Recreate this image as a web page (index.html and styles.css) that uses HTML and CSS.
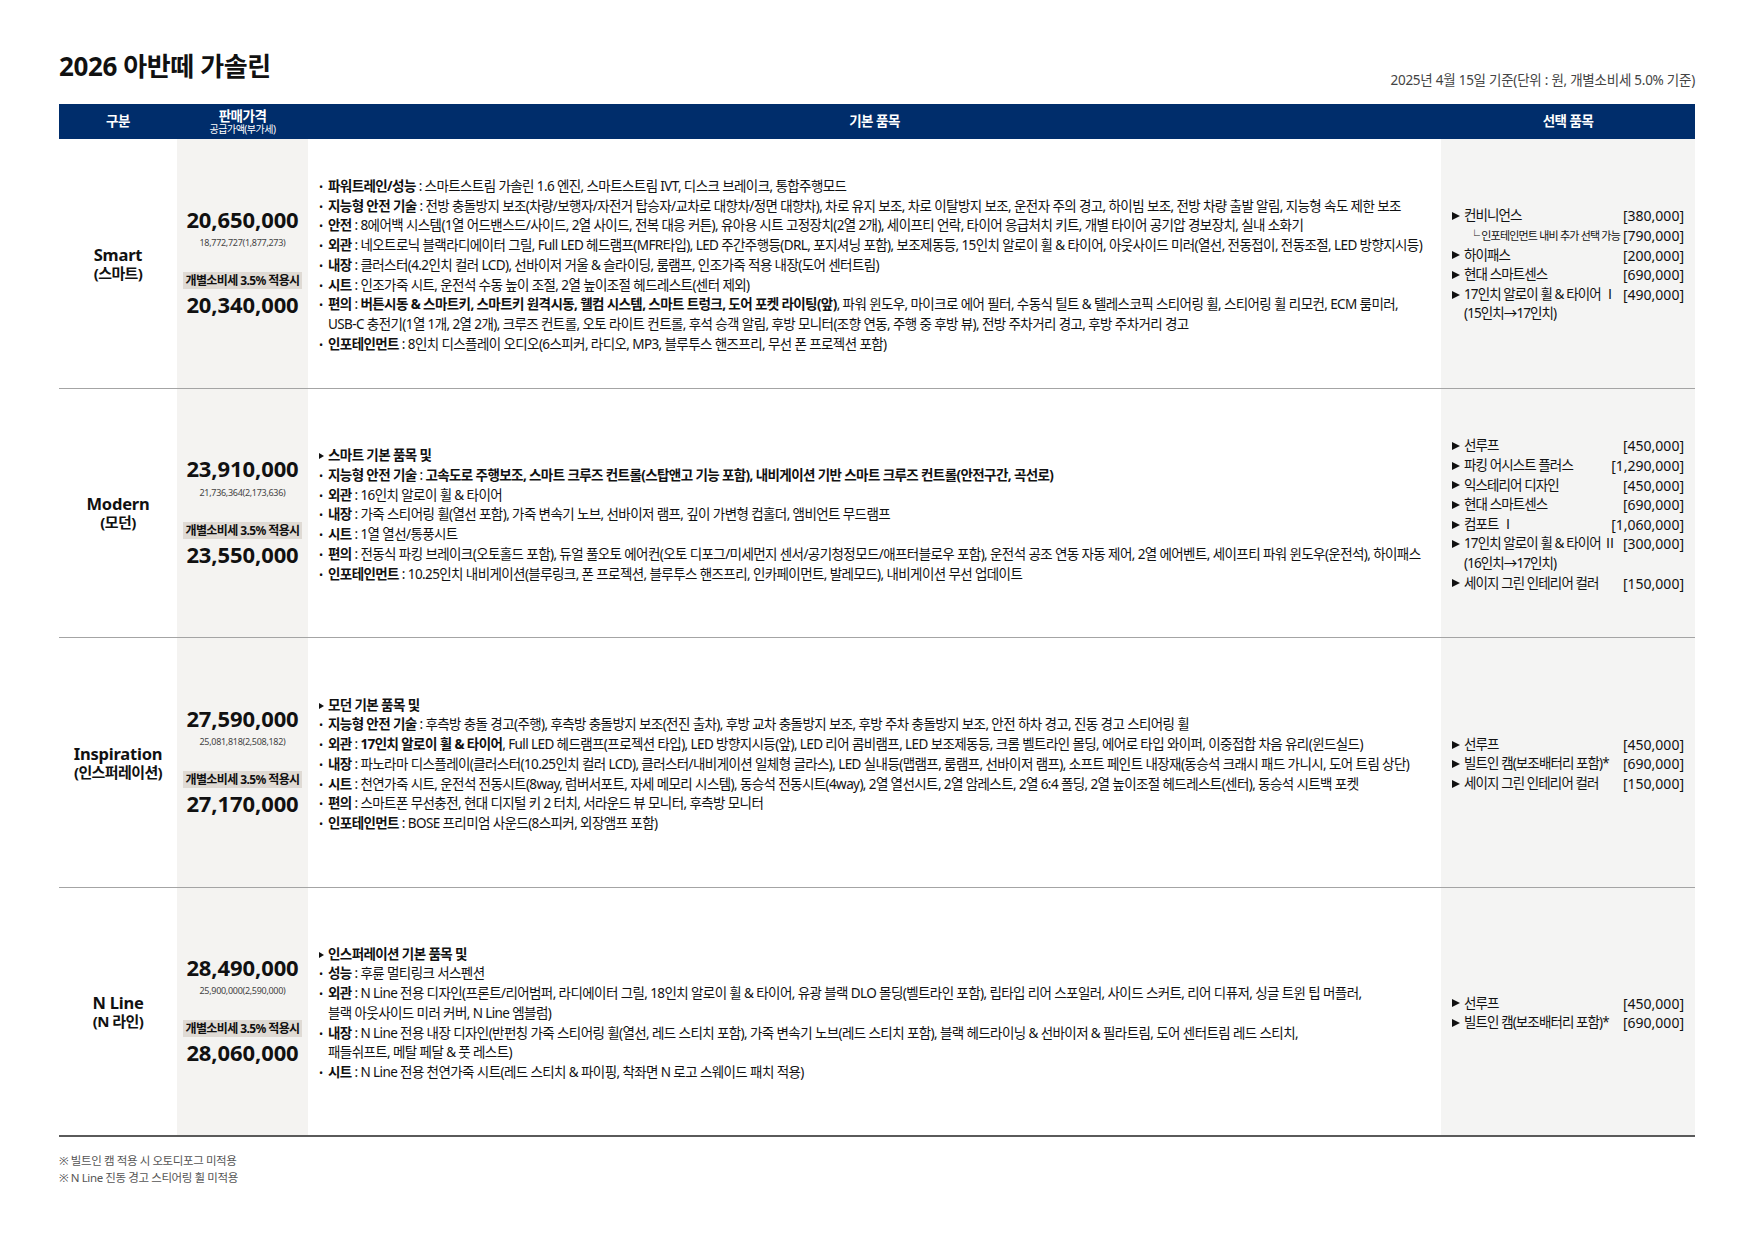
FILE: index.html
```html
<!DOCTYPE html>
<html lang="ko">
<head>
<meta charset="utf-8">
<title>2026 아반떼 가솔린</title>
<link rel="stylesheet" href="styles.css">
</head>
<body>
<div class="page">
  <div class="top">
    <h1 class="title">2026 아반떼 가솔린</h1>
    <div class="date">2025년 4월 15일 기준(단위 : 원, 개별소비세 5.0% 기준)</div>
  </div>

  <div class="table">
    <div class="thead">
      <div class="th">구분</div>
      <div class="th th-price"><div>판매가격</div><div class="th-sub">공급가액(부가세)</div></div>
      <div class="th">기본 품목</div>
      <div class="th">선택 품목</div>
    </div>

    <!-- Smart -->
    <div class="row">
      <div class="cell model"><div class="m-en">Smart</div><div class="m-ko">(스마트)</div></div>
      <div class="cell price">
        <div class="big">20,650,000</div>
        <div class="sub">18,772,727(1,877,273)</div>
        <div class="badge">개별소비세 3.5% 적용시</div>
        <div class="big big2">20,340,000</div>
      </div>
      <div class="cell basic">
        <ul class="list">
          <li><span class="bl">•</span><span class="tx"><b>파워트레인/성능</b> : 스마트스트림 가솔린 1.6 엔진, 스마트스트림 IVT, 디스크 브레이크, 통합주행모드</span></li>
          <li><span class="bl">•</span><span class="tx"><b>지능형 안전 기술</b> : 전방 충돌방지 보조(차량/보행자/자전거 탑승자/교차로 대향차/정면 대향차), 차로 유지 보조, 차로 이탈방지 보조, 운전자 주의 경고, 하이빔 보조, 전방 차량 출발 알림, 지능형 속도 제한 보조</span></li>
          <li><span class="bl">•</span><span class="tx"><b>안전</b> : 8에어백 시스템(1열 어드밴스드/사이드, 2열 사이드, 전복 대응 커튼), 유아용 시트 고정장치(2열 2개), 세이프티 언락, 타이어 응급처치 키트, 개별 타이어 공기압 경보장치, 실내 소화기</span></li>
          <li><span class="bl">•</span><span class="tx"><b>외관</b> : 네오트로닉 블랙라디에이터 그릴, Full LED 헤드램프(MFR타입), LED 주간주행등(DRL, 포지셔닝 포함), 보조제동등, 15인치 알로이 휠 &amp; 타이어, 아웃사이드 미러(열선, 전동접이, 전동조절, LED 방향지시등)</span></li>
          <li><span class="bl">•</span><span class="tx"><b>내장</b> : 클러스터(4.2인치 컬러 LCD), 선바이저 거울 &amp; 슬라이딩, 룸램프, 인조가죽 적용 내장(도어 센터트림)</span></li>
          <li><span class="bl">•</span><span class="tx"><b>시트</b> : 인조가죽 시트, 운전석 수동 높이 조절, 2열 높이조절 헤드레스트(센터 제외)</span></li>
          <li><span class="bl">•</span><span class="tx"><b>편의</b> : <b>버튼시동 &amp; 스마트키, 스마트키 원격시동, 웰컴 시스템, 스마트 트렁크, 도어 포켓 라이팅(앞)</b>, 파워 윈도우, 마이크로 에어 필터, 수동식 틸트 &amp; 텔레스코픽 스티어링 휠, 스티어링 휠 리모컨, ECM 룸미러,<br>USB-C 충전기(1열 1개, 2열 2개), 크루즈 컨트롤, 오토 라이트 컨트롤, 후석 승객 알림, 후방 모니터(조향 연동, 주행 중 후방 뷰), 전방 주차거리 경고, 후방 주차거리 경고</span></li>
          <li><span class="bl">•</span><span class="tx"><b>인포테인먼트</b> : 8인치 디스플레이 오디오(6스피커, 라디오, MP3, 블루투스 핸즈프리, 무선 폰 프로젝션 포함)</span></li>
        </ul>
      </div>
      <div class="cell opts">
        <div class="opt"><span class="on"><i class="tri"></i>컨비니언스</span><span class="op">[380,000]</span></div>
        <div class="opt"><span class="on subopt">└ 인포테인먼트 내비 추가 선택 가능</span><span class="op">[790,000]</span></div>
        <div class="opt"><span class="on"><i class="tri"></i>하이패스</span><span class="op">[200,000]</span></div>
        <div class="opt"><span class="on"><i class="tri"></i>현대 스마트센스</span><span class="op">[690,000]</span></div>
        <div class="opt"><span class="on"><i class="tri"></i>17인치 알로이 휠 &amp; 타이어 Ⅰ</span><span class="op">[490,000]</span></div>
        <div class="opt cont">(15인치→17인치)</div>
      </div>
    </div>

    <!-- Modern -->
    <div class="row">
      <div class="cell model"><div class="m-en">Modern</div><div class="m-ko">(모던)</div></div>
      <div class="cell price">
        <div class="big">23,910,000</div>
        <div class="sub">21,736,364(2,173,636)</div>
        <div class="badge">개별소비세 3.5% 적용시</div>
        <div class="big big2">23,550,000</div>
      </div>
      <div class="cell basic">
        <ul class="list">
          <li><span class="bl"><i class="stri"></i></span><span class="tx"><b>스마트 기본 품목 및</b></span></li>
          <li><span class="bl">•</span><span class="tx"><b>지능형 안전 기술</b> : <b>고속도로 주행보조, 스마트 크루즈 컨트롤(스탑앤고 기능 포함), 내비게이션 기반 스마트 크루즈 컨트롤(안전구간, 곡선로)</b></span></li>
          <li><span class="bl">•</span><span class="tx"><b>외관</b> : 16인치 알로이 휠 &amp; 타이어</span></li>
          <li><span class="bl">•</span><span class="tx"><b>내장</b> : 가죽 스티어링 휠(열선 포함), 가죽 변속기 노브, 선바이저 램프, 깊이 가변형 컵홀더, 앰비언트 무드램프</span></li>
          <li><span class="bl">•</span><span class="tx"><b>시트</b> : 1열 열선/통풍시트</span></li>
          <li><span class="bl">•</span><span class="tx"><b>편의</b> : 전동식 파킹 브레이크(오토홀드 포함), 듀얼 풀오토 에어컨(오토 디포그/미세먼지 센서/공기청정모드/애프터블로우 포함), 운전석 공조 연동 자동 제어, 2열 에어벤트, 세이프티 파워 윈도우(운전석), 하이패스</span></li>
          <li><span class="bl">•</span><span class="tx"><b>인포테인먼트</b> : 10.25인치 내비게이션(블루링크, 폰 프로젝션, 블루투스 핸즈프리, 인카페이먼트, 발레모드), 내비게이션 무선 업데이트</span></li>
        </ul>
      </div>
      <div class="cell opts">
        <div class="opt"><span class="on"><i class="tri"></i>선루프</span><span class="op">[450,000]</span></div>
        <div class="opt"><span class="on"><i class="tri"></i>파킹 어시스트 플러스</span><span class="op">[1,290,000]</span></div>
        <div class="opt"><span class="on"><i class="tri"></i>익스테리어 디자인</span><span class="op">[450,000]</span></div>
        <div class="opt"><span class="on"><i class="tri"></i>현대 스마트센스</span><span class="op">[690,000]</span></div>
        <div class="opt"><span class="on"><i class="tri"></i>컴포트 Ⅰ</span><span class="op">[1,060,000]</span></div>
        <div class="opt"><span class="on"><i class="tri"></i>17인치 알로이 휠 &amp; 타이어 Ⅱ</span><span class="op">[300,000]</span></div>
        <div class="opt cont">(16인치→17인치)</div>
        <div class="opt"><span class="on"><i class="tri"></i>세이지 그린 인테리어 컬러</span><span class="op">[150,000]</span></div>
      </div>
    </div>

    <!-- Inspiration -->
    <div class="row">
      <div class="cell model"><div class="m-en">Inspiration</div><div class="m-ko">(인스퍼레이션)</div></div>
      <div class="cell price">
        <div class="big">27,590,000</div>
        <div class="sub">25,081,818(2,508,182)</div>
        <div class="badge">개별소비세 3.5% 적용시</div>
        <div class="big big2">27,170,000</div>
      </div>
      <div class="cell basic">
        <ul class="list">
          <li><span class="bl"><i class="stri"></i></span><span class="tx"><b>모던 기본 품목 및</b></span></li>
          <li><span class="bl">•</span><span class="tx"><b>지능형 안전 기술</b> : 후측방 충돌 경고(주행), 후측방 충돌방지 보조(전진 출차), 후방 교차 충돌방지 보조, 후방 주차 충돌방지 보조, 안전 하차 경고, 진동 경고 스티어링 휠</span></li>
          <li><span class="bl">•</span><span class="tx"><b>외관</b> : <b>17인치 알로이 휠 &amp; 타이어</b>, Full LED 헤드램프(프로젝션 타입), LED 방향지시등(앞), LED 리어 콤비램프, LED 보조제동등, 크롬 벨트라인 몰딩, 에어로 타입 와이퍼, 이중접합 차음 유리(윈드실드)</span></li>
          <li><span class="bl">•</span><span class="tx"><b>내장</b> : 파노라마 디스플레이(클러스터(10.25인치 컬러 LCD), 클러스터/내비게이션 일체형 글라스), LED 실내등(맵램프, 룸램프, 선바이저 램프), 소프트 페인트 내장재(동승석 크래시 패드 가니시, 도어 트림 상단)</span></li>
          <li><span class="bl">•</span><span class="tx"><b>시트</b> : 천연가죽 시트, 운전석 전동시트(8way, 럼버서포트, 자세 메모리 시스템), 동승석 전동시트(4way), 2열 열선시트, 2열 암레스트, 2열 6:4 폴딩, 2열 높이조절 헤드레스트(센터), 동승석 시트백 포켓</span></li>
          <li><span class="bl">•</span><span class="tx"><b>편의</b> : 스마트폰 무선충전, 현대 디지털 키 2 터치, 서라운드 뷰 모니터, 후측방 모니터</span></li>
          <li><span class="bl">•</span><span class="tx"><b>인포테인먼트</b> : BOSE 프리미엄 사운드(8스피커, 외장앰프 포함)</span></li>
        </ul>
      </div>
      <div class="cell opts">
        <div class="opt"><span class="on"><i class="tri"></i>선루프</span><span class="op">[450,000]</span></div>
        <div class="opt"><span class="on"><i class="tri"></i>빌트인 캠(보조배터리 포함)*</span><span class="op">[690,000]</span></div>
        <div class="opt"><span class="on"><i class="tri"></i>세이지 그린 인테리어 컬러</span><span class="op">[150,000]</span></div>
      </div>
    </div>

    <!-- N Line -->
    <div class="row row-last">
      <div class="cell model"><div class="m-en">N Line</div><div class="m-ko">(N 라인)</div></div>
      <div class="cell price">
        <div class="big">28,490,000</div>
        <div class="sub">25,900,000(2,590,000)</div>
        <div class="badge">개별소비세 3.5% 적용시</div>
        <div class="big big2">28,060,000</div>
      </div>
      <div class="cell basic">
        <ul class="list">
          <li><span class="bl"><i class="stri"></i></span><span class="tx"><b>인스퍼레이션 기본 품목 및</b></span></li>
          <li><span class="bl">•</span><span class="tx"><b>성능</b> : 후륜 멀티링크 서스펜션</span></li>
          <li><span class="bl">•</span><span class="tx"><b>외관</b> : N Line 전용 디자인(프론트/리어범퍼, 라디에이터 그릴, 18인치 알로이 휠 &amp; 타이어, 유광 블랙 DLO 몰딩(벨트라인 포함), 립타입 리어 스포일러, 사이드 스커트, 리어 디퓨저, 싱글 트윈 팁 머플러,<br>블랙 아웃사이드 미러 커버, N Line 엠블럼)</span></li>
          <li><span class="bl">•</span><span class="tx"><b>내장</b> : N Line 전용 내장 디자인(반펀칭 가죽 스티어링 휠(열선, 레드 스티치 포함), 가죽 변속기 노브(레드 스티치 포함), 블랙 헤드라이닝 &amp; 선바이저 &amp; 필라트림, 도어 센터트림 레드 스티치,<br>패들쉬프트, 메탈 페달 &amp; 풋 레스트)</span></li>
          <li><span class="bl">•</span><span class="tx"><b>시트</b> : N Line 전용 천연가죽 시트(레드 스티치 &amp; 파이핑, 착좌면 N 로고 스웨이드 패치 적용)</span></li>
        </ul>
      </div>
      <div class="cell opts">
        <div class="opt"><span class="on"><i class="tri"></i>선루프</span><span class="op">[450,000]</span></div>
        <div class="opt"><span class="on"><i class="tri"></i>빌트인 캠(보조배터리 포함)*</span><span class="op">[690,000]</span></div>
      </div>
    </div>
  </div>

  <div class="notes">
    <div>※ 빌트인 캠 적용 시 오토디포그 미적용</div>
    <div>※ N Line 진동 경고 스티어링 휠 미적용</div>
  </div>
</div>
</body>
</html>
```

FILE: styles.css
```css
* { box-sizing: border-box; }

body {
  margin: 0;
  background: #ffffff;
  color: #111111;
  font-family: "Noto Sans", "Noto Sans CJK KR", sans-serif;
}

.page {
  width: 1754px;
  padding: 0 59px;
}

.top {
  display: flex;
  justify-content: space-between;
  align-items: flex-start;
  height: 104px;
}

.title {
  margin: 51px 0 0;
  font-size: 26px;
  line-height: 31px;
  font-weight: 700;
  letter-spacing: -0.4px;
  color: #111;
}

.date {
  margin-top: 71px;
  font-size: 13.5px;
  line-height: 18px;
  letter-spacing: -0.25px;
  color: #444;
}

.thead,
.row {
  display: grid;
  grid-template-columns: 118px 131px 1fr 254px;
}

.thead {
  height: 35px;
  background: #002d6b;
  color: #fff;
}

.th {
  display: flex;
  flex-direction: column;
  align-items: center;
  justify-content: center;
  font-size: 13.5px;
  font-weight: 700;
  letter-spacing: -0.5px;
  line-height: 15px;
}

.th-price { padding-top: 1px; }

.th-sub {
  font-size: 10px;
  line-height: 11px;
  font-weight: 400;
  letter-spacing: -0.5px;
}

.row {
  height: 249.5px;
  border-bottom: 1px solid #a4a4a4;
}

.row-last {
  border-bottom: 2px solid #5a5a5a;
}

.cell {
  display: flex;
  flex-direction: column;
  justify-content: center;
}

.model {
  align-items: center;
  text-align: center;
  font-weight: 700;
  line-height: 18px;
  padding-top: 1px;
}

.m-en {
  font-size: 16.5px;
  letter-spacing: -0.2px;
}

.m-ko {
  font-size: 15px;
  letter-spacing: -0.6px;
}

.price {
  background: #f4f3f1;
  align-items: center;
}

.big {
  font-size: 22px;
  line-height: 24px;
  font-weight: 700;
  letter-spacing: -0.1px;
}

.sub {
  margin-top: 6.5px;
  font-size: 9px;
  line-height: 12px;
  color: #444;
  letter-spacing: -0.3px;
}

.badge {
  margin-top: 23px;
  padding: 0 2px;
  background: #dfdad4;
  font-size: 12px;
  line-height: 17px;
  font-weight: 700;
  letter-spacing: -0.6px;
}

.big2 {
  margin-top: 3px;
  margin-bottom: 3.5px;
}

.basic {
  padding-left: 11px;
  padding-top: 5px;
}

.list {
  margin: 0;
  padding: 0;
  list-style: none;
}

.list li {
  display: flex;
  align-items: flex-start;
  font-size: 13.5px;
  line-height: 19.75px;
  letter-spacing: -0.6px;
}

.bl {
  flex: none;
  width: 9px;
  height: 19.75px;
  display: flex;
  align-items: center;
  font-size: 11px;
}

.tx {
  white-space: nowrap;
}

.tx b { font-weight: 700; }

.stri {
  display: block;
  width: 0;
  height: 0;
  border-left: 5px solid #111;
  border-top: 3.5px solid transparent;
  border-bottom: 3.5px solid transparent;
}

.opts {
  background: #f4f4f3;
  padding: 4px 11px 0;
}

.opt {
  display: flex;
  justify-content: space-between;
  align-items: center;
  font-size: 13.5px;
  line-height: 19.6px;
  letter-spacing: -0.9px;
  white-space: nowrap;
}

.on {
  display: flex;
  align-items: center;
}

.tri {
  display: inline-block;
  width: 0;
  height: 0;
  border-left: 8px solid #111;
  border-top: 4.5px solid transparent;
  border-bottom: 4.5px solid transparent;
  margin-right: 4px;
}

.subopt {
  padding-left: 17px;
  font-size: 11px;
  letter-spacing: -0.8px;
}

.op {
  font-size: 14px;
  letter-spacing: 0;
}

.cont {
  padding-left: 12px;
}

.notes {
  margin-top: 15px;
  font-size: 11.5px;
  line-height: 17px;
  letter-spacing: -0.4px;
  color: #555;
}
```
